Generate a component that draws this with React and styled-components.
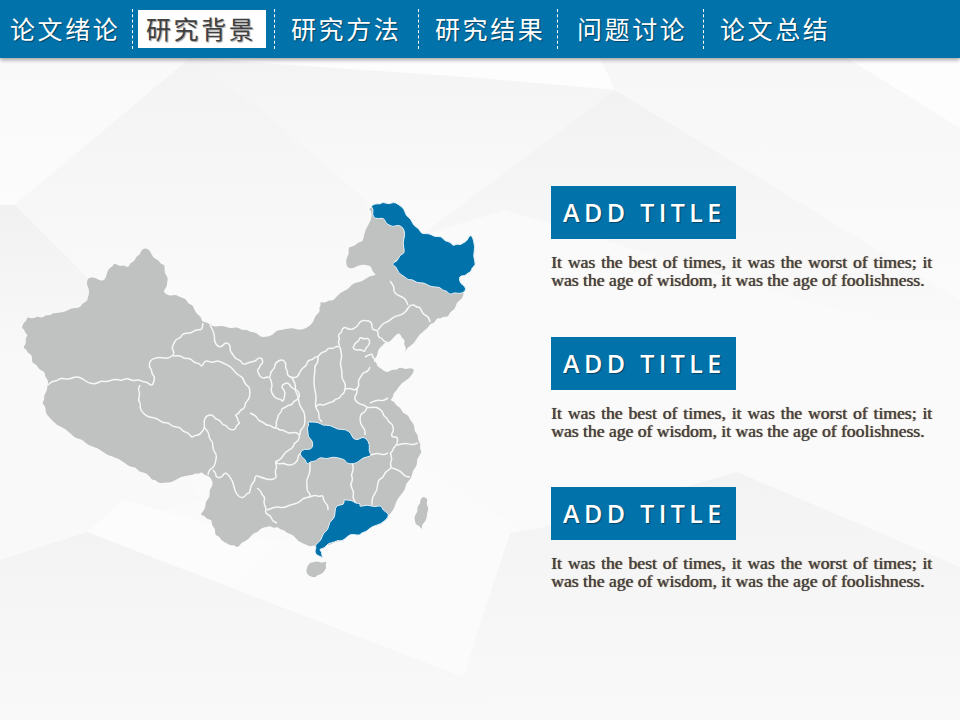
import React from 'react'
import styled, { createGlobalStyle } from 'styled-components'

const GlobalStyle = createGlobalStyle`
  html, body { margin: 0; padding: 0; background: #fafafa; }
  #root { width: 960px; height: 720px; }
`

const Page = styled.div`
  position: relative;
  width: 960px;
  height: 720px;
  overflow: hidden;
  font-family: "Liberation Sans", "Noto Sans CJK SC", sans-serif;
`
const Backdrop = styled.svg`
  position: absolute;
  left: 0;
  top: 0;
`
const Nav = styled.nav`
  position: relative;
  display: flex;
  align-items: center;
  height: 58px;
  background: #0272ab;
  box-shadow: 0 2px 4px rgba(0, 0, 0, 0.35);
`
const NavItem = styled.div`
  flex: 0 0 ${p => p.$width}px;
  display: flex;
  align-items: center;
  height: 40px;
  padding-left: ${p => p.$pad}px;
  box-sizing: border-box;
  border-right: ${p => (p.$last ? 'none' : '1px dashed #fff')};
`
const NavLabel = styled.span`
  display: block;
  box-sizing: border-box;
  height: 38px;
  line-height: 37px;
  padding: ${p => (p.$active ? '0 10px 0 8px' : '0')};
  font-family: "Noto Sans CJK SC", sans-serif;
  font-size: 25px;
  letter-spacing: 2.6px;
  white-space: nowrap;
  color: ${p => (p.$active ? '#404040' : '#fff')};
  background: ${p => (p.$active ? '#fff' : 'transparent')};
  text-shadow: 1px 1px 1px rgba(0, 0, 0, 0.4);
`
const Main = styled.main`
  position: relative;
  display: flex;
  align-items: flex-start;
  padding-left: 20px;
`
const MapBox = styled.svg`
  flex: 0 0 460px;
  margin-top: 142px;
`
const Column = styled.div`
  display: flex;
  flex-direction: column;
  gap: 47.5px;
  margin-left: 71px;
  padding-top: 128px;
`
const Block = styled.section`
  width: 381px;
`
const TitleBox = styled.h2`
  width: 185px;
  height: 53px;
  margin: 0 0 14px;
  padding-left: 12px;
  box-sizing: border-box;
  background: #0272ab;
  color: #fff;
  font-family: "Open Sans", sans-serif;
  font-size: 25px;
  font-weight: 600;
  line-height: 52px;
  letter-spacing: 4.4px;
  white-space: nowrap;
  text-shadow: 1px 1px 1px rgba(0, 0, 0, 0.4);
`
const Body = styled.p`
  margin: 0;
  color: #404040;
  font-family: "Liberation Serif", serif;
  font-size: 17.6px;
  line-height: 18px;
  text-align: justify;
  text-shadow: 0.7px 0 0.7px rgba(0, 0, 0, 0.7);
`

const navItems = [
  { label: '论文绪论', width: 133, pad: 10 },
  { label: '研究背景', width: 142, pad: 5, active: true },
  { label: '研究方法', width: 144, pad: 16 },
  { label: '研究结果', width: 139, pad: 16 },
  { label: '问题讨论', width: 146, pad: 19 },
  { label: '论文总结', width: 200, pad: 16, last: true },
]

// [points, fill]  fills are gradient ids or colours
const facets = [
  ['0,58 190,58 0,215', 'url(#gTopLeft)'],
  ['190,58 600,58 615,90 480,78', '#fdfdfd'],
  ['600,58 847,58 960,128 960,300 615,90', 'url(#gTopMid)'],
  ['847,58 960,58 960,128', '#fdfdfd'],
  ['190,58 480,78 615,90 420,236 367,201 263,111', 'url(#gUpper)'],
  ['190,58 263,111 367,201 380,300 90,280 15,205', 'url(#gLeft)'],
  ['615,90 960,300 960,340 800,300 505,210 420,236', 'url(#gDark)'],
  ['0,205 15,205 90,280 110,340 0,360', 'url(#gCorner)'],
  ['0,360 110,340 200,500 87,532 0,560', '#f9f9f9'],
  ['87,532 123,500 280,543 233,590', '#fcfcfc'],
  ['280,543 415,460 523,532 463,677 233,590', '#fbfbfb'],
  ['0,560 87,532 463,677 540,720 0,720', 'url(#gBottom)'],
  ['463,677 510,533 540,528 737,472 960,567 960,720 500,720', 'url(#gBottom)'],
]

// outline and borders are traced as point lists, then softened by wavy()
const chinaBody =
  '22 328,27 317,42 318,53 313,80 308,88 298,88 278,105 280,107 273,114 263,128 268,136 257,145 248,150 250,153 258,165 265,167 283,164 293,180 297,193 305,202 322,207 322,213 327,237 327,250 332,265 337,282 330,307 328,320 312,320 302,333 301,353 283,377 275,368 265,347 268,348 247,363 242,372 212,368 208,376 207,390 223,405 225,407 253,393 264,405 275,417 281,440 285,450 293,464 290,463 298,450 312,448 317,437 318,428 328,407 348,405 353,405 340,398 333,393 338,383 345,373 360,380 368,387 373,400 367,415 370,397 390,390 400,400 407,410 420,418 435,418 440,422 452,413 470,405 490,387 517,357 532,335 542,318 547,307 545,287 533,278 527,267 527,253 533,238 548,227 543,215 535,212 520,200 515,210 497,212 480,202 472,193 475,163 483,152 480,147 473,130 467,98 448,75 438,50 418,42 403,46 393,48 385,45 372,32 363,32 355,23 348,28 335'

const borders = [
  '48 385,60 378,82 378,88 383,107 382,127 378,143 382,153 385,155 377,149 367,150 360,173 356,173 345,183 333,202 330,203 323',
  '173 356,190 358,202 367,205 360,223 363,243 377,250 392,245 408,235 415,240 423,233 430,223 425,213 415,207 415,202 432,192 438,180 427,163 423,143 413,138 400,140 385',
  '210 325,218 347,228 343,232 353,243 365,250 362,262 358,263 363,257 370,260 377,270 378,275 363,282 359,286 363,287 375,292 378,298 377,308 360,318 357,328 348,340 347,338 335,345 327,350 330,365 320,372 322,372 330,378 330,378 337,387 342',
  '270 378,273 395,283 402,285 395,282 385,288 382,300 395,292 405,282 408,278 418,275 428',
  '204 427,213 442,216 460,208 475',
  '213 470,218 478,227 473,240 498,250 493,255 475,263 478,270 480,277 478,275 462,287 465,293 465,302 452',
  '257 488,265 497,265 513,277 523',
  '267 510,290 505,310 497,323 495,328 510',
  '250 413,263 422,273 428,283 430,300 435,293 448,275 462',
  '378 330,383 323,388 322,407 310,410 305,420 307,430 322',
  '390 281,397 295,405 298,408 305',
  '353 348,360 337,370 340,365 352,353 348',
  '365 357,372 353,375 362',
  '345 389,357 389,360 378,370 367',
  '340 347,342 370,345 390,340 398,330 402,315 407',
  '318 357,315 370,315 407,322 422',
  '292 378,298 395,305 420,300 435',
  '357 389,355 400,367 408,375 407,378 408,387 418,393 427,392 437,398 437,397 445,390 453,392 468,378 480,372 505',
  '370 403,388 398',
  '367 408,360 417,365 435',
  '392 468,410 477',
  '397 445,418 443',
  '370 455,388 453',
  '352 462,353 480,350 485,356 503',
  '310 463,307 487,310 497',
]

const provinces = [
  '371 206,383 202,398 204,411 219,421 234,441 236,453 246,463 243,472 235,476 265,468 273,459 278,466 291,450 295,440 287,417 283,405 277,391 264,405 253,403 227,389 225,382 218,375 219',
  '308 422,330 425,351 433,353 439,366 438,372 456,350 464,342 459,320 457,307 465,300 452,313 447,308 432',
  '344 500,361 503,359 507,381 505,389 517,366 532,357 535,350 534,345 539,335 542,319 549,324 558,316 555,315 545,328 530,335 512,336 505,344 505',
]

// adds a small kink to long segments and rounds the corners, for the hand-drawn map edge
function wavy(list, closed) {
  const pts = list.split(',').map(p => p.trim().split(' ').map(Number))
  if (closed) pts.push(pts[0])
  const out = []
  pts.forEach((p, i) => {
    out.push(p)
    const q = pts[i + 1]
    if (!q) return
    const dx = q[0] - p[0]
    const dy = q[1] - p[1]
    const len = Math.hypot(dx, dy)
    if (len > 9) {
      const side = i % 2 ? 1 : -1
      const k = (side * Math.min(len * 0.09, 1.6)) / len
      out.push([p[0] + dx * 0.4 - dy * k, p[1] + dy * 0.4 + dx * k])
      out.push([p[0] + dx * 0.7 + dy * k, p[1] + dy * 0.7 - dx * k])
    }
  })
  let d = `M${out[0][0].toFixed(1)} ${out[0][1].toFixed(1)}`
  for (let i = 1; i < out.length - 1; i++) {
    const mx = (out[i][0] + out[i + 1][0]) / 2
    const my = (out[i][1] + out[i + 1][1]) / 2
    d += `Q${out[i][0].toFixed(1)} ${out[i][1].toFixed(1)} ${mx.toFixed(1)} ${my.toFixed(1)}`
  }
  const last = out[out.length - 1]
  d += `L${last[0].toFixed(1)} ${last[1].toFixed(1)}`
  return closed ? d + 'Z' : d
}

function ChinaMap() {
  return (
    <MapBox width="460" height="380" viewBox="20 200 460 380">
      <path d={wavy(chinaBody, true)} fill="#c0c1c1" />
      <path d={wavy('423 497,428 498,427 513,422 530,415 522,417 507', true)} fill="#c0c1c1" />
      <path d={wavy('310 563,327 561,325 570,315 578,307 575,306 568', true)} fill="#c0c1c1" />
      {borders.map(b => (
        <path key={b} d={wavy(b)} fill="none" stroke="#f7f7f7" strokeWidth="1.5" strokeLinejoin="round" />
      ))}
      {provinces.map(b => (
        <path key={b} d={wavy(b, true)} fill="#0272ab" stroke="#e6f2f8" strokeWidth="1" strokeLinejoin="round" />
      ))}
    </MapBox>
  )
}

const bodyText =
  'It was the best of times, it was the worst of times; it was the age of wisdom, it was the age of foolishness.'

export default function App() {
  return (
    <Page>
      <GlobalStyle />
      <Backdrop width="960" height="720" viewBox="0 0 960 720">
        <defs>
          <linearGradient id="gTopLeft" x1="0" y1="0" x2="0" y2="1">
            <stop offset="0" stopColor="#f9f9f9" />
            <stop offset="1" stopColor="#fcfcfc" />
          </linearGradient>
          <linearGradient id="gTopMid" x1="0" y1="0" x2="0" y2="1">
            <stop offset="0" stopColor="#f7f7f7" />
            <stop offset="1" stopColor="#fbfbfb" />
          </linearGradient>
          <linearGradient id="gUpper" x1="0" y1="0" x2="0" y2="1">
            <stop offset="0" stopColor="#f4f4f4" />
            <stop offset="1" stopColor="#fbfbfb" />
          </linearGradient>
          <linearGradient id="gLeft" x1="0" y1="0" x2="0" y2="1">
            <stop offset="0" stopColor="#f3f3f3" />
            <stop offset="0.6" stopColor="#f7f7f7" />
            <stop offset="1" stopColor="#fafafa" />
          </linearGradient>
          <linearGradient id="gDark" x1="0" y1="0" x2="0" y2="1">
            <stop offset="0" stopColor="#f2f2f2" />
            <stop offset="1" stopColor="#fafafa" />
          </linearGradient>
          <linearGradient id="gCorner" x1="0" y1="0" x2="0" y2="1">
            <stop offset="0" stopColor="#f1f1f1" />
            <stop offset="1" stopColor="#f9f9f9" />
          </linearGradient>
          <linearGradient id="gBottom" x1="0" y1="0" x2="0" y2="1">
            <stop offset="0" stopColor="#f3f3f3" />
            <stop offset="1" stopColor="#f9f9f9" />
          </linearGradient>
        </defs>
        {facets.map(([points, fill]) => (
          <polygon key={points} points={points} fill={fill} />
        ))}
      </Backdrop>
      <Nav>
        {navItems.map(item => (
          <NavItem key={item.label} $width={item.width} $pad={item.pad} $last={item.last}>
            <NavLabel $active={item.active}>{item.label}</NavLabel>
          </NavItem>
        ))}
      </Nav>
      <Main>
        <ChinaMap />
        <Column>
          {[0, 1, 2].map(i => (
            <Block key={i}>
              <TitleBox>ADD TITLE</TitleBox>
              <Body>{bodyText}</Body>
            </Block>
          ))}
        </Column>
      </Main>
    </Page>
  )
}
